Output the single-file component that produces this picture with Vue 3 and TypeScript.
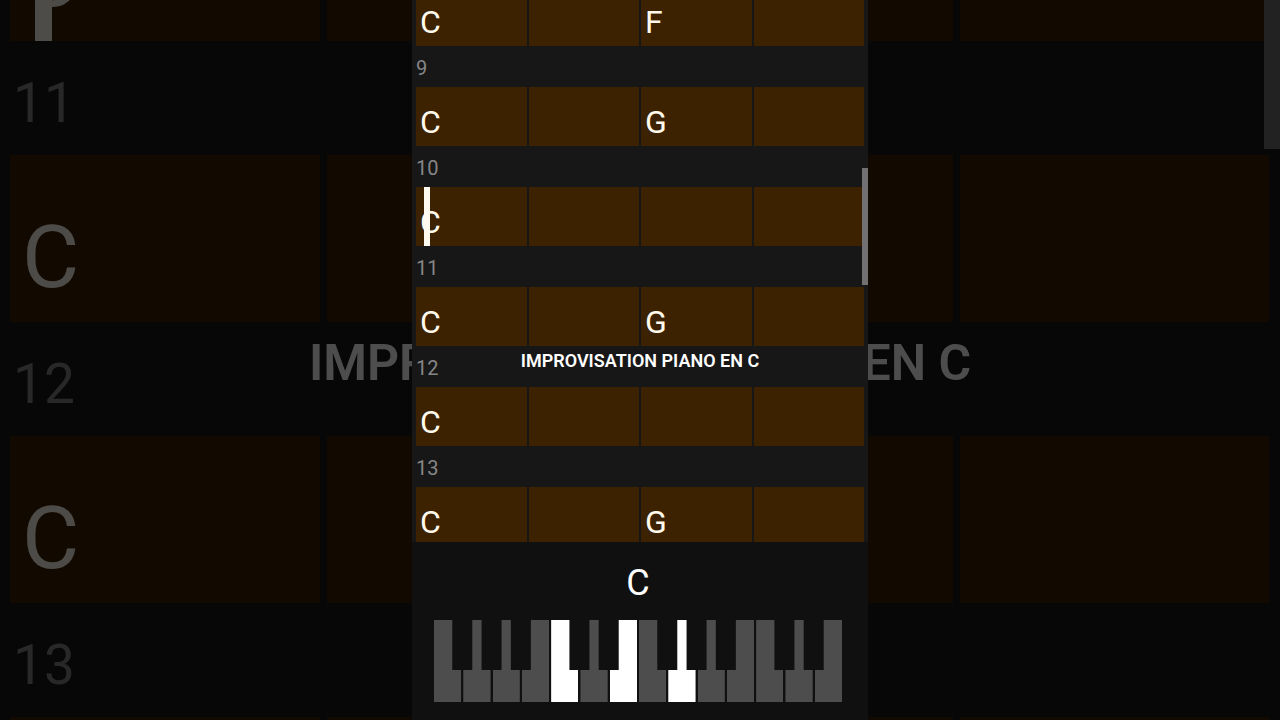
<script setup lang="ts">
interface Row {
  measure: string
  chords: string[]
  cursor?: boolean
}

interface Key {
  note: string
  shape: 'left' | 'middle' | 'right'
  active: boolean
}

const title = 'IMPROVISATION PIANO EN C'
const currentChord = 'C'

const layers: Record<'backdrop' | 'score', Row[]> = {
  backdrop: [
    { measure: '', chords: ['C', '', '', ''], cursor: true },
    { measure: '11', chords: ['C', '', '', ''] },
    { measure: '12', chords: ['C', '', '', ''] },
    { measure: '13', chords: ['', '', '', ''] },
  ],
  score: [
    { measure: '', chords: ['C', '', 'F', ''] },
    { measure: '9', chords: ['C', '', 'G', ''] },
    { measure: '10', chords: ['C', '', '', ''], cursor: true },
    { measure: '11', chords: ['C', '', 'G', ''] },
    { measure: '12', chords: ['C', '', '', ''] },
    { measure: '13', chords: ['C', '', 'G', ''] },
  ],
}

const shapes: Record<string, Key['shape']> = {
  F: 'left', G: 'middle', A: 'middle', B: 'right', C: 'left', D: 'middle', E: 'right',
}
const activeKeys = [4, 6, 8]
const keys: Key[] = [...'FGABCDEFGABCDE'].map((note, i) => ({
  note,
  shape: shapes[note],
  active: activeKeys.includes(i),
}))
</script>

<template>
  <div class="stage">
    <div class="sheet backdrop" aria-hidden="true">
      <div v-for="(row, r) in layers.backdrop" :key="r" class="row">
        <div v-if="row.measure" class="measure">{{ row.measure }}</div>
        <div class="bar">
          <div v-for="(chord, c) in row.chords" :key="c" class="cell">
            {{ chord }}
            <span v-if="row.cursor && c === 0" class="cursor"></span>
          </div>
        </div>
      </div>
      <div class="thumb"></div>
      <div class="title">{{ title }}</div>
    </div>

    <main class="phone">
      <section class="sheet score">
        <div v-for="(row, r) in layers.score" :key="r" class="row">
          <div v-if="row.measure" class="measure">{{ row.measure }}</div>
          <div class="bar">
            <div v-for="(chord, c) in row.chords" :key="c" class="cell">
              {{ chord }}
              <span v-if="row.cursor && c === 0" class="cursor"></span>
            </div>
          </div>
        </div>
        <div class="thumb"></div>
      </section>
      <section class="deck">
        <div class="current">{{ currentChord }}</div>
        <div class="keyboard">
          <button
            v-for="(key, k) in keys"
            :key="k"
            type="button"
            class="key"
            :class="[key.shape, { active: key.active }]"
            :aria-label="key.note"
          ></button>
        </div>
      </section>
      <h1 class="title">{{ title }}</h1>
    </main>
  </div>
</template>

<style>
body {
  background: #000;
}
</style>

<style scoped>
.stage {
  position: relative;
  display: flex;
  justify-content: center;
  height: 100vh;
  min-height: 480px;
  overflow: hidden;
  background: #000;
  font-family: Roboto, "Liberation Sans", sans-serif;
}

.stage * {
  box-sizing: border-box;
}

.sheet {
  position: relative;
  overflow: hidden;
  background: #171717;
}

.bar {
  display: grid;
  grid-template-columns: repeat(4, 1fr);
}

.cell {
  position: relative;
  display: flex;
  align-items: flex-end;
  background: #3c2200;
  color: #fff8ec;
}

.measure {
  color: #868686;
}

.cursor {
  position: absolute;
  top: 0;
  bottom: 0;
  background: #fffaf0;
}

.thumb {
  position: absolute;
  right: 0;
  background: #727072;
}

.title {
  position: absolute;
  inset: 0;
  display: grid;
  place-items: center;
  margin: 0;
  color: #fff;
  font-weight: 600;
  white-space: nowrap;
  pointer-events: none;
}

.backdrop {
  position: absolute;
  inset: 0;
  opacity: 0.3;
}

.backdrop .row:first-child {
  margin-top: -126px;
}

.backdrop .measure {
  height: 114px;
  padding: 10px 0 0 13px;
  font-size: 55px;
  line-height: 104px;
}

.backdrop .bar {
  gap: 7px;
  height: 167px;
  padding: 0 11px 0 10px;
}

.backdrop .cell {
  padding: 0 0 20px 12px;
  font-size: 88px;
  line-height: 90px;
}

.backdrop .cursor {
  left: 25px;
  width: 17px;
}

.backdrop .thumb {
  top: 0;
  width: 16px;
  height: 149px;
}

.backdrop .title {
  padding-top: 5px;
  font-size: 50px;
}

.phone {
  position: relative;
  display: flex;
  flex-direction: column;
  width: 100%;
  max-width: 456px;
  background: #101010;
}

.score {
  flex: 1;
  min-height: 0;
}

.score .row:first-child {
  margin-top: -13px;
}

.score .measure {
  height: 41px;
  padding: 2px 0 0 4px;
  font-size: 20px;
  line-height: 40px;
}

.score .bar {
  gap: 2px;
  height: 59px;
  padding: 0 4px;
}

.score .cell {
  padding: 0 0 8px 4px;
  font-size: 32px;
  line-height: 32px;
}

.score .cursor {
  left: 8px;
  width: 6px;
}

.score .thumb {
  top: 168px;
  width: 6px;
  height: 117px;
}

.phone > .title {
  font-size: 18px;
}

.deck {
  display: flex;
  flex-direction: column;
  gap: 17px;
  padding: 21px 26px 18px 22px;
}

.current {
  color: #fff;
  font-size: 36px;
  line-height: 40px;
  text-align: center;
}

.keyboard {
  display: grid;
  grid-template-columns: repeat(14, 1fr);
  gap: 2px;
  height: 82px;
}

.key {
  min-width: 0;
  margin: 0;
  padding: 0;
  border: 0;
  background: #4d4d4d;
}

.key.active {
  background: #fff;
}

.key.left {
  clip-path: polygon(0 0, 67% 0, 67% 61%, 100% 61%, 100% 100%, 0 100%);
}

.key.middle {
  clip-path: polygon(33% 0, 67% 0, 67% 61%, 100% 61%, 100% 100%, 0 100%, 0 61%, 33% 61%);
}

.key.right {
  clip-path: polygon(33% 0, 100% 0, 100% 100%, 0 100%, 0 61%, 33% 61%);
}
</style>
